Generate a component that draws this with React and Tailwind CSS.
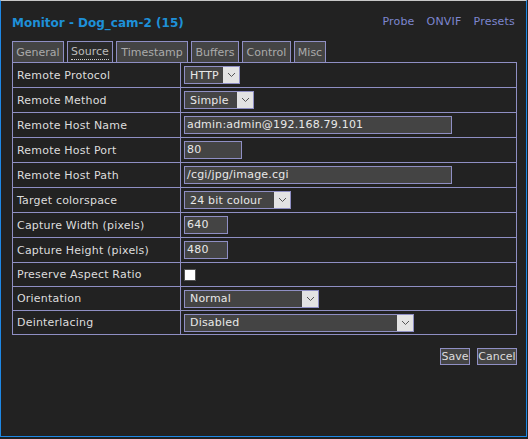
import React from "react";

const tabs = [
  ["General", "w-[52px]"],
  ["Source", "w-[46px]"],
  ["Timestamp", "w-[72px]"],
  ["Buffers", "w-[48px]"],
  ["Control", "w-[49px]"],
  ["Misc", "w-[32px]"],
];

const Chevron = () => (
  <svg width="9" height="6" viewBox="0 0 9 6" fill="none">
    <path d="M1 1l3.5 3.5L8 1" stroke="#555" strokeWidth="1" />
  </svg>
);

const Select = ({ value, width }) => (
  <div
    className="flex items-center h-[18px] border border-[#8f8fc4] bg-[#444] text-[#e8e8e8]"
    style={{ width }}
  >
    <span className="flex-1 pl-[5px] leading-none">{value}</span>
    <span className="flex items-center justify-center w-[16px] h-[16px] bg-[#e3e3e3]">
      <Chevron />
    </span>
  </div>
);

const Input = ({ value, width }) => (
  <div
    className="flex items-center h-[18px] border border-[#8f8fc4] bg-[#444] text-[#e8e8e8] pl-[2px]"
    style={{ width }}
  >
    {value}
  </div>
);

const rows = [
  ["Remote Protocol", <Select value="HTTP" width={56} />],
  ["Remote Method", <Select value="Simple" width={70} />],
  ["Remote Host Name", <Input value="admin:admin@192.168.79.101" width={268} />],
  ["Remote Host Port", <Input value="80" width={58} />],
  ["Remote Host Path", <Input value="/cgi/jpg/image.cgi" width={268} />],
  ["Target colorspace", <Select value="24 bit colour" width={107} />],
  ["Capture Width (pixels)", <Input value="640" width={44} />],
  ["Capture Height (pixels)", <Input value="480" width={44} />],
  ["Preserve Aspect Ratio", <div className="w-[12px] h-[12px] bg-white border border-[#555]" />],
  ["Orientation", <Select value="Normal" width={135} />],
  ["Deinterlacing", <Select value="Disabled" width={230} />],
];

export default function App() {
  return (
    <div className="w-[528px] h-[439px] bg-[#222] font-['DejaVu_Sans',Verdana,sans-serif] text-[11px] tracking-[0.2px]">
      <div className="w-[527px] h-[437px] border-t border-t-[#c8c8c8] border-x border-b border-x-[#1e88e5] border-b-[#1e88e5] bg-[#222] pt-[13px] px-[11px]">
        {/* Header */}
        <div className="flex items-center justify-between h-[17px]">
          <h1 className="text-[12px] font-bold text-[#1e90d8] tracking-normal">Monitor - Dog_cam-2 (15)</h1>
          <div className="flex gap-[12px] text-[#7d86cf]">
            <span>Probe</span>
            <span>ONVIF</span>
            <span>Presets</span>
          </div>
        </div>

        {/* Tabs */}
        <div className="flex gap-[3px] mt-[10px] h-[21px] tracking-normal">
          {tabs.map(([t, w]) => (
            <div
              key={t}
              className={
                w +
                " border border-[#8f8fc4] border-b-0 flex items-center justify-center leading-none " +
                (t === "Source" ? "bg-[#2a2a2a] text-[#bbb]" : "bg-[#444] text-[#aaa]")
              }
            >
              <span className={t === "Source" ? "border-b border-dotted border-[#ccc] pb-[2px] mt-[2px]" : ""}>
                {t}
              </span>
            </div>
          ))}
        </div>

        {/* Form table */}
        <table className="w-[505px] border-collapse text-[#ddd]">
          <tbody>
            {rows.map(([label, field], i) => (
              <tr key={label} className={i < 8 ? "h-[25px]" : "h-[24px]"}>
                <td className="w-[168px] border border-[#8f8fc4] pl-[4px] pt-[2px] align-middle">{label}</td>
                <td className="border border-[#8f8fc4] pl-[3px] align-middle">{field}</td>
              </tr>
            ))}
          </tbody>
        </table>

        {/* Buttons */}
        <div className="flex justify-end gap-[7px] mt-[13px] w-[505px] tracking-normal">
          <button className="w-[30px] h-[17px] border border-[#8f8fc4] bg-[#444] text-[#ddd] leading-none">Save</button>
          <button className="w-[40px] h-[17px] border border-[#8f8fc4] bg-[#444] text-[#ddd] leading-none">Cancel</button>
        </div>
      </div>
    </div>
  );
}
